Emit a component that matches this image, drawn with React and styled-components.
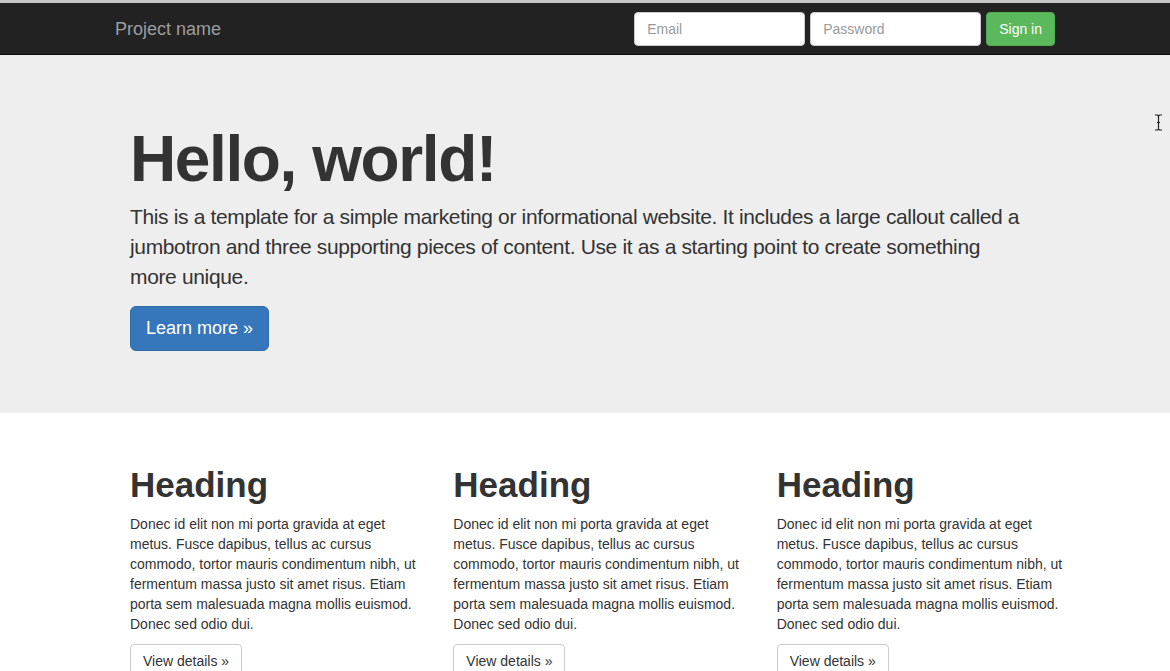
import styled, { createGlobalStyle } from 'styled-components'

const GlobalStyle = createGlobalStyle`
  html, body {
    margin: 0;
    padding: 0;
    background: #fff;
  }
  body {
    font-family: "Liberation Sans", Arial, sans-serif;
    font-size: 14px;
    line-height: 20px;
    color: #333;
    overflow: hidden;
  }
  * {
    box-sizing: border-box;
  }
`

const Page = styled.div`
  position: relative;
  min-height: 671px;
`

const TopStrip = styled.div`
  height: 3px;
  background: #c6c6c6;
`

const Navbar = styled.nav`
  background: #222;
  border-bottom: 1px solid #080808;
  height: 52px;
`

const NavInner = styled.div`
  width: 970px;
  margin: 0 auto;
  padding: 0 15px;
  display: flex;
  justify-content: space-between;
  align-items: flex-start;
`

const Brand = styled.a`
  font-size: 18px;
  line-height: 20px;
  color: #9d9d9d;
  text-decoration: none;
  padding: 16px 0 15px;
`

const SignInForm = styled.form`
  display: flex;
  gap: 5px;
  margin: 9px 0 0;
`

const Input = styled.input`
  width: 171px;
  height: 34px;
  padding: 6px 12px;
  font-family: inherit;
  font-size: 14px;
  color: #555;
  background: #fff;
  border: 1px solid #ccc;
  border-radius: 4px;
  outline: none;

  &::placeholder {
    color: #999;
  }
`

const Button = styled.button`
  font-family: inherit;
  cursor: pointer;
  border: 1px solid ${p => p.$border};
  background: ${p => p.$bg};
  color: ${p => p.$color};
  font-size: ${p => (p.$large ? '18px' : '14px')};
  line-height: ${p => (p.$large ? '24px' : '20px')};
  padding: ${p => (p.$large ? '9px 15px 10px' : '6px 12px')};
  border-radius: ${p => (p.$large ? '6px' : '4px')};
  white-space: nowrap;
`

const Jumbotron = styled.section`
  background: #eee;
  padding: 48px 0 62px;
`

const Container = styled.div`
  margin-left: 130px;
  width: 910px;
`

const Title = styled.h1`
  font-size: 64px;
  line-height: 1.1;
  font-weight: 700;
  letter-spacing: -1.4px;
  margin: 21px 0 8px;
  color: #333;
`

const Lead = styled.p`
  max-width: 896px;
  font-size: 21px;
  line-height: 30px;
  font-weight: 400;
  letter-spacing: -0.35px;
  margin: 0 0 14px;
`

const Row = styled.div`
  width: 970px;
  margin-left: 115px;
  padding-top: 33px;
  display: grid;
  grid-template-columns: repeat(3, 1fr);
`

const Col = styled.div`
  padding: 0 15px;

  h2 {
    font-size: 35px;
    line-height: 1.1;
    font-weight: 700;
    margin: 20px 0 9px;
  }

  p {
    margin: 0 0 10px;
  }
`

const Cursor = styled.svg`
  position: absolute;
  left: 1154px;
  top: 114px;
`

const columns = [0, 1, 2]

const App = () => {
  return (
    <Page>
      <GlobalStyle />
      <TopStrip />
      <Navbar>
        <NavInner>
          <Brand href="#">Project name</Brand>
          <SignInForm onSubmit={e => e.preventDefault()}>
            <Input type="text" placeholder="Email" />
            <Input type="password" placeholder="Password" />
            <Button type="submit" $bg="#5cb85c" $border="#4cae4c" $color="#fff">Sign in</Button>
          </SignInForm>
        </NavInner>
      </Navbar>

      <Jumbotron>
        <Container>
          <Title>Hello, world!</Title>
          <Lead>
            This is a template for a simple marketing or informational website. It includes a large callout
            called a jumbotron and three supporting pieces of content. Use it as a starting point to create
            something more unique.
          </Lead>
          <Button $large $bg="#3677bb" $border="#2e6da4" $color="#fff">Learn more »</Button>
        </Container>
      </Jumbotron>

      <Row>
        {columns.map(i => (
          <Col key={i}>
            <h2>Heading</h2>
            <p>
              Donec id elit non mi porta gravida at eget metus. Fusce dapibus, tellus ac cursus commodo, tortor
              mauris condimentum nibh, ut fermentum massa justo sit amet risus. Etiam porta sem malesuada magna
              mollis euismod. Donec sed odio dui.
            </p>
            <Button $bg="#fff" $border="#ccc" $color="#333">View details »</Button>
          </Col>
        ))}
      </Row>

      <Cursor width="9" height="17" viewBox="0 0 9 17">
        <path d="M1 1h2.5L4.5 2L5.5 1H8M4.5 2v13M1 16h2.5l1-1l1 1H8M3 8.5h3" stroke="#222" strokeWidth="1.2" fill="none" />
      </Cursor>
    </Page>
  )
}

export default App
